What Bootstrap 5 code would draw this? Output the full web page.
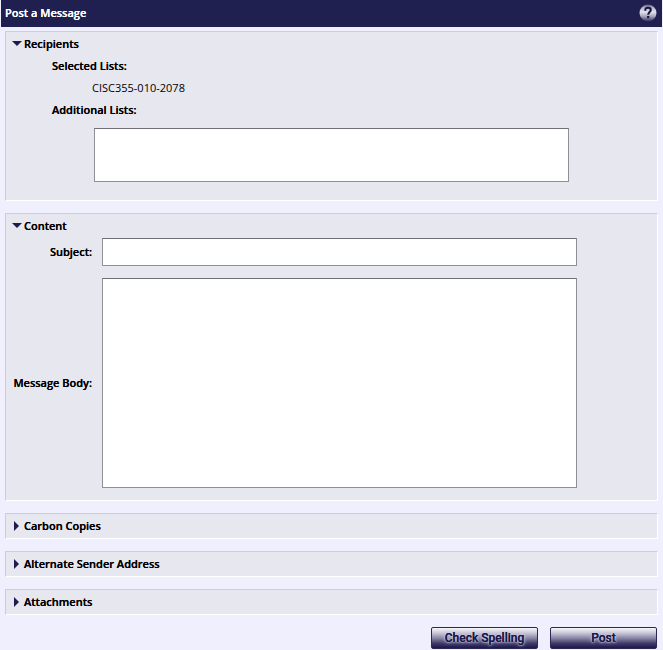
<!DOCTYPE html>
<html lang="en">
<head>
<meta charset="utf-8">
<meta name="viewport" content="width=device-width, initial-scale=1">
<title>Post a Message</title>
<link rel="stylesheet" href="https://cdn.jsdelivr.net/npm/bootstrap@5.3.0/dist/css/bootstrap.min.css">
<style>
body { background: #f0effe; color: #000; font: 11px/22px "Open Sans", "Noto Sans", sans-serif; }
.strong-text { font-weight: 600; text-shadow: 0 0 0 currentColor; }
.titlebar { background: #1f1f50; color: #fff; height: 27px; margin: 0 1px; padding: 0 5px 1px 4px; }
.titlebar h1 { font-size: 11px; line-height: 26px; }
.help { width: 18px; height: 18px; }
.stack { padding: 4px 5px 0; gap: 12px; }
.panel { background: #e7e7ef; border: 1px solid #fff; border-top-color: #ccccdd; border-left-color: #ccccdd; padding: 1px 0; }
.toggle { font-size: 11px; line-height: 22px; color: #000; gap: 2px; padding: 0 6px; }
.toggle svg { width: 10px; height: 10px; fill: #1c1c50; }
.toggle[aria-expanded="true"] svg { transform: rotate(90deg); }
.recipients { padding: 0 46px 17px; }
.list-name { padding-left: 40px; }
.lists-box { margin: 7px 0 0 42px; }
.content-form { padding: 1px 10px 11px 0; }
.field-label { width: 86px; flex: none; text-align: right; }
.field { width: 475px; max-width: 100%; min-width: 0; border: 1px solid #8f8f95; border-top-color: #6f6f75; border-radius: 0; background: #fff; font-size: 11px; padding: 4px; resize: none; display: block; }
.h-lists { height: 54px; }
.h-line { height: 28px; }
.h-body { height: 210px; }
.gap-field { gap: 10px; }
.gap-panel { gap: 12px; }
.actions { padding: 0 1px 1px; }
.metal { width: 107px; height: 22px; padding: 0; border: 1px solid #2b2855; border-radius: 2px; background: linear-gradient(#f7f6fb 0%, #c9c7d8 25%, #8582a3 52%, #3c3867 78%, #1b184b 100%); color: #1b184b; font: 500 12px/20px Roboto, sans-serif; text-shadow: 0 0 0 #1b184b, 0 0 2px #d5d3e4, 0 0 2px #d5d3e4, 0 0 4px #c2c0d6; }
</style>
<script src="https://cdn.jsdelivr.net/npm/bootstrap@5.3.0/dist/js/bootstrap.bundle.min.js" defer></script>
</head>
<body>
<header class="titlebar d-flex align-items-center justify-content-between">
  <h1 class="strong-text m-0">Post a Message</h1>
  <button type="button" class="help btn p-0 border-0 d-flex" aria-label="Help">
    <svg viewBox="0 0 18 18" width="18" height="18" aria-hidden="true">
      <defs><linearGradient id="orb" x1="0" y1="0" x2="0" y2="1"><stop offset="0" stop-color="#5d5a80"/><stop offset=".2" stop-color="#b9b7cc"/><stop offset=".45" stop-color="#e2e1ec"/><stop offset=".7" stop-color="#a4a2bd"/><stop offset="1" stop-color="#2f2c5a"/></linearGradient></defs>
      <circle cx="9" cy="9" r="8.5" fill="url(#orb)"/>
      <path d="M6.3 6.8V6C6.3 4.5 7.2 3.8 9 3.8S11.8 4.6 11.8 6C11.8 8 9.2 8.2 9.2 10.8" fill="none" stroke="#15133d" stroke-width="2"/>
      <rect x="8.1" y="12" width="2.2" height="2.2" fill="#15133d"/>
    </svg>
  </button>
</header>

<form class="stack d-flex flex-column">
  <section class="panel">
    <button type="button" class="toggle btn border-0 strong-text d-flex align-items-center" data-bs-toggle="collapse" data-bs-target="#recipients" aria-expanded="true" aria-controls="recipients"><svg viewBox="0 0 10 10" aria-hidden="true"><path d="M2 0L7 5L2 10Z"/></svg>Recipients</button>
    <div id="recipients" class="collapse show">
      <div class="recipients">
        <div class="strong-text">Selected Lists:</div>
        <div class="list-name">CISC355-010-2078</div>
        <label class="strong-text d-block" for="lists">Additional Lists:</label>
        <div class="lists-box"><textarea id="lists" class="field h-lists"></textarea></div>
      </div>
    </div>
  </section>

  <section class="panel">
    <button type="button" class="toggle btn border-0 strong-text d-flex align-items-center" data-bs-toggle="collapse" data-bs-target="#content" aria-expanded="true" aria-controls="content"><svg viewBox="0 0 10 10" aria-hidden="true"><path d="M2 0L7 5L2 10Z"/></svg>Content</button>
    <div id="content" class="collapse show">
      <div class="content-form d-flex flex-column gap-panel">
        <div class="d-flex align-items-center gap-field">
          <label class="field-label strong-text" for="subject">Subject:</label>
          <input id="subject" type="text" class="field h-line">
        </div>
        <div class="d-flex align-items-center gap-field">
          <label class="field-label strong-text" for="message">Message Body:</label>
          <textarea id="message" class="field h-body"></textarea>
        </div>
      </div>
    </div>
  </section>

  <section class="panel">
    <button type="button" class="toggle btn border-0 strong-text d-flex align-items-center" aria-expanded="false"><svg viewBox="0 0 10 10" aria-hidden="true"><path d="M2 0L7 5L2 10Z"/></svg>Carbon Copies</button>
  </section>
  <section class="panel">
    <button type="button" class="toggle btn border-0 strong-text d-flex align-items-center" aria-expanded="false"><svg viewBox="0 0 10 10" aria-hidden="true"><path d="M2 0L7 5L2 10Z"/></svg>Alternate Sender Address</button>
  </section>
  <section class="panel">
    <button type="button" class="toggle btn border-0 strong-text d-flex align-items-center" aria-expanded="false"><svg viewBox="0 0 10 10" aria-hidden="true"><path d="M2 0L7 5L2 10Z"/></svg>Attachments</button>
  </section>

  <div class="actions d-flex justify-content-end gap-panel">
    <button type="button" class="metal">Check Spelling</button>
    <button type="submit" class="metal">Post</button>
  </div>
</form>
</body>
</html>
